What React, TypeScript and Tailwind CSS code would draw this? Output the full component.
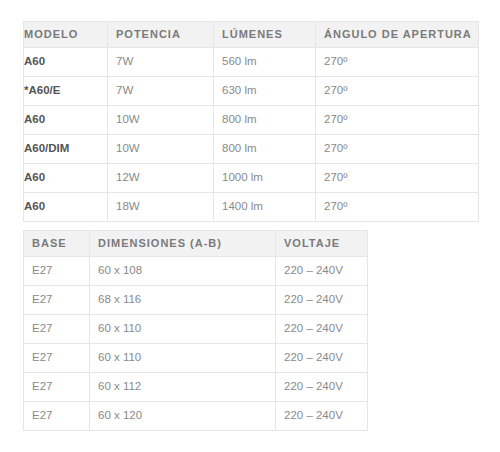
const models = [
  ["A60", "7W", "560 lm", "270º"],
  ["*A60/E", "7W", "630 lm", "270º"],
  ["A60", "10W", "800 lm", "270º"],
  ["A60/DIM", "10W", "800 lm", "270º"],
  ["A60", "12W", "1000 lm", "270º"],
  ["A60", "18W", "1400 lm", "270º"],
];

const sizes = [
  ["E27", "60 x 108", "220 – 240V"],
  ["E27", "68 x 116", "220 – 240V"],
  ["E27", "60 x 110", "220 – 240V"],
  ["E27", "60 x 110", "220 – 240V"],
  ["E27", "60 x 112", "220 – 240V"],
  ["E27", "60 x 120", "220 – 240V"],
];

// padding-left is set per cell so the first column of the top table can sit flush
const th =
  "h-[26px] whitespace-nowrap border border-[#e6e6e6] bg-[#f2f2f2] pr-0 text-left align-middle text-[11px] font-bold uppercase tracking-[1px] text-[#7a7a7a]";
const td =
  "h-[29px] whitespace-nowrap border border-[#e6e6e6] pr-0 align-middle text-[11.5px]";

export default function App() {
  return (
    <div className="min-h-[452px] w-[500px] bg-white pl-[23px] pt-[21px] font-['Liberation_Sans',Arial,sans-serif]">
      <table className="w-[455px] table-fixed border-collapse">
        <colgroup>
          <col className="w-[84px]" />
          <col className="w-[106px]" />
          <col className="w-[102px]" />
          <col className="w-[163px]" />
        </colgroup>
        <thead>
          <tr>
            <th className={`${th} pl-0`}>Modelo</th>
            <th className={`${th} pl-2`}>Potencia</th>
            <th className={`${th} pl-2`}>Lúmenes</th>
            <th className={`${th} pl-2`}>Ángulo de apertura</th>
          </tr>
        </thead>
        <tbody>
          {models.map((r, i) => (
            <tr key={i}>
              <td className={`${td} pl-0 font-bold text-[#555]`}>{r[0]}</td>
              <td className={`${td} pl-2 text-[#8a8a8a]`}>{r[1]}</td>
              <td className={`${td} pl-2 text-[#8a8a8a]`}>{r[2]}</td>
              <td className={`${td} pl-2 text-[#8a8a8a]`}>{r[3]}</td>
            </tr>
          ))}
        </tbody>
      </table>

      <table className="mt-[8px] w-[344px] table-fixed border-collapse">
        <colgroup>
          <col className="w-[66px]" />
          <col className="w-[186px]" />
          <col className="w-[92px]" />
        </colgroup>
        <thead>
          <tr>
            <th className={`${th} pl-2`}>Base</th>
            <th className={`${th} pl-2`}>Dimensiones (A-B)</th>
            <th className={`${th} pl-2`}>Voltaje</th>
          </tr>
        </thead>
        <tbody>
          {sizes.map((r, i) => (
            <tr key={i}>
              <td className={`${td} pl-2 text-[#8a8a8a]`}>{r[0]}</td>
              <td className={`${td} pl-2 text-[#8a8a8a]`}>{r[1]}</td>
              <td className={`${td} pl-2 text-[#8a8a8a]`}>{r[2]}</td>
            </tr>
          ))}
        </tbody>
      </table>
    </div>
  );
}
